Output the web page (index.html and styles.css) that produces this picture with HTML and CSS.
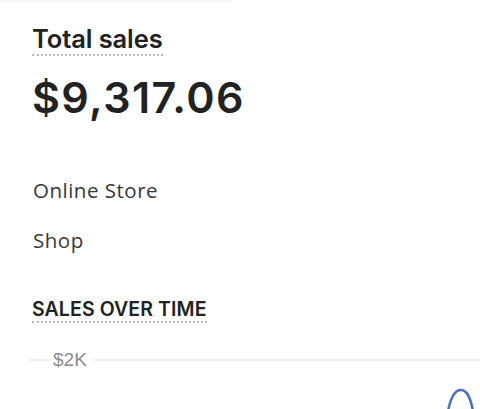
FILE: index.html
```html
<!DOCTYPE html>
<html>
<head>
<meta charset="utf-8">
<link rel="stylesheet" href="styles.css">
</head>
<body>
<div class="topline"></div>
<div class="card">
  <h2 class="title"><span class="dotted">Total sales</span></h2>
  <div class="amount">$9,317.06</div>
  <ul class="channels">
    <li>Online Store</li>
    <li>Shop</li>
  </ul>
  <h3 class="section"><span class="dotted">SALES OVER TIME</span></h3>
  <div class="chart">
    <div class="gridrow"><span class="tick">$2K</span></div>
    <svg class="curve" width="480" height="40" viewBox="0 0 480 40">
      <path d="M447 45 C450 25 455 18 461 18 C467 18 471 25 474 45" fill="none" stroke="#4a6cc6" stroke-width="2.5"/>
    </svg>
  </div>
</div>
</body>
</html>
```
FILE: styles.css
```css
html, body {
  margin: 0;
  padding: 0;
  background: #ffffff;
  width: 480px;
  height: 409px;
  overflow: hidden;
}
body {
  font-family: Inter, "Liberation Sans", sans-serif;
  color: #202223;
}
.topline {
  width: 232px;
  height: 2px;
  background: #f4f4f4;
}
.card {
  padding-left: 32px;
}
.title {
  margin: 22px 0 0 0;
  font-size: 25.5px;
  font-weight: 600;
  line-height: 30px;
  letter-spacing: -0.1px;
}
.dotted {
  border-bottom: 2px dotted #b8bcc0;
}
.amount {
  margin-top: 17px;
  font-size: 43px;
  font-weight: 600;
  line-height: 52px;
  letter-spacing: 1.4px;
}
.channels {
  list-style: none;
  margin: 54px 0 0 1px;
  padding: 0;
  display: flex;
  flex-direction: column;
  gap: 24px;
  font-family: "Open Sans", Lato, sans-serif;
  font-size: 20.5px;
  letter-spacing: 0.5px;
  color: #36383a;
}
.channels li {
  line-height: 26px;
}
.section {
  margin: 44px 0 0 0;
  font-size: 19.5px;
  font-weight: 600;
  line-height: 24px;
  letter-spacing: 0.1px;
}
.chart {
  margin-left: -32px;
  margin-top: 27px;
}
.gridrow {
  position: relative;
  height: 24px;
  margin-left: 30px;
  display: flex;
  align-items: center;
}
.gridrow::before {
  content: "";
  position: absolute;
  left: 0;
  right: 0;
  top: 11px;
  height: 2px;
  background: #f0f0f0;
}
.tick {
  position: relative;
  margin-left: 20px;
  padding: 0 5px 0 3px;
  background: #fff;
  font-family: "Liberation Sans", Arial, sans-serif;
  font-size: 19px;
  color: #8c8c8c;
}
.curve {
  display: block;
}
```
